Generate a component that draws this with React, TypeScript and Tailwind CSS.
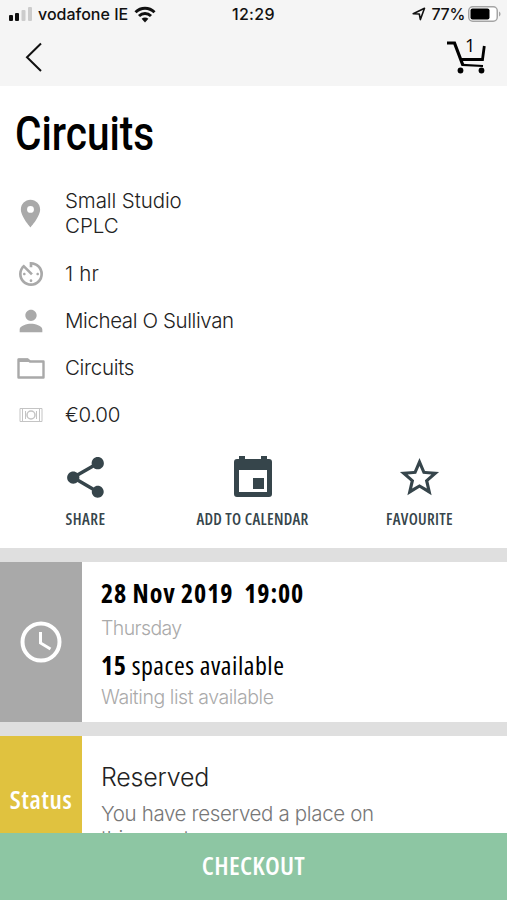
import type { ReactNode } from "react";
import { MdAvTimer, MdPerson, MdPlace, MdShare, MdStarBorder } from "react-icons/md";

const light = "font-['Inter',sans-serif] font-light whitespace-nowrap";
const condensed = "font-['Open_Sans',sans-serif] [font-stretch:75%] whitespace-nowrap";

function StatusBar() {
  return (
    <div className="flex h-7 items-center pl-[9px] pr-1.5 font-['Inter',sans-serif] text-[16px] font-medium text-[#111]">
      <div className="flex w-[190px] items-center">
        <svg width="24" height="16" viewBox="0 0 24 16">
          <rect x="0" y="9" width="4" height="6" rx="1" fill="#111" />
          <rect x="6" y="7" width="4" height="8" rx="1" fill="#111" />
          <rect x="12.500" y="4" width="4" height="11" rx="1" fill="#ccc" />
          <rect x="19" y="1" width="4" height="14" rx="1" fill="#ccc" />
        </svg>
        <span className="ml-[5px]">vodafone IE</span>
        <svg className="ml-1.5" width="22" height="17" viewBox="0 0 22 17" fill="none" stroke="#111" strokeWidth="3">
          <path d="M1.500 6.200C7 .8 15 .8 20.500 6.200" />
          <path d="M5 10c3.500-3.300 8.500-3.300 12 0" />
          <path d="M11 16.500 7.600 12.800c2-1.700 4.800-1.700 6.800 0z" fill="#111" stroke="none" />
        </svg>
      </div>
      <span className="ml-[33px] tracking-[0.3px]">12:29</span>
      <div className="ml-auto flex items-center">
        <svg width="14" height="14" viewBox="0 0 14 14" fill="none" stroke="#111" strokeWidth="1.600" strokeLinejoin="round">
          <path d="M1.200 6.800 12.500 1.300 8.400 12.600 7.300 7z" />
        </svg>
        <span className="ml-[5px] tracking-[-0.3px]">77%</span>
        <svg className="ml-[3px]" width="33" height="16" viewBox="0 0 33 16">
          <rect x=".75" y=".75" width="28.500" height="14.500" rx="4" fill="#fff" stroke="#a5a5a5" strokeWidth="1.500" />
          <rect x="2.500" y="2.500" width="19" height="11" rx="2" fill="#000" />
          <path d="M31 5.500c2 .8 2 4.200 0 5z" fill="#a5a5a5" />
        </svg>
      </div>
    </div>
  );
}

function Header() {
  return (
    <header className="h-[86px] shrink-0 bg-[#f5f5f5]">
      <StatusBar />
      <div className="flex h-[58px] items-center justify-between pl-[25px] pr-5">
        <svg width="18" height="30" viewBox="0 0 18 30" fill="none" stroke="#111" strokeWidth="2">
          <path d="M16 1.500 2 15.300 16 29" />
        </svg>
        <div className="relative h-9 w-[40px]">
          <svg width="40" height="36" viewBox="0 0 40 36" fill="none" stroke="#000">
            <path d="M0 4h7.500l8.500 22.500" strokeWidth="3.200" />
            <path d="M13.500 20.500h22L37.300 7" strokeWidth="2.800" />
            <path d="M15 25.800 36 27" strokeWidth="2.200" />
            <circle cx="13.500" cy="31.500" r="2.900" fill="#000" stroke="none" />
            <circle cx="34.500" cy="31.500" r="2.900" fill="#000" stroke="none" />
          </svg>
          <span className="absolute left-[18px] top-[-6px] font-['Open_Sans',sans-serif] text-[18px] leading-6">1</span>
        </div>
      </div>
    </header>
  );
}

function DetailRow({ icon, children, className }: { icon: ReactNode; children: ReactNode; className: string }) {
  return (
    <div className={`flex items-center ${className}`}>
      <div className="flex w-[61px] justify-center text-[#a9a9a9]">{icon}</div>
      <div className={`ml-1 text-[20.500px] leading-[25px] text-[#222] ${light}`}>{children}</div>
    </div>
  );
}

function Action({ icon, label, className }: { icon: ReactNode; label: string; className: string }) {
  return (
    <div className="flex w-[167px] flex-col items-center">
      <div className="flex h-[50px] items-center">{icon}</div>
      <span className={`mt-[7px] text-[16px] font-semibold leading-5 ${condensed} ${className}`}>{label}</span>
    </div>
  );
}

export default function App() {
  return (
    <div className="flex h-[900px] w-[507px] flex-col overflow-hidden bg-white">
      <Header />
      <main className="min-h-0 flex-1 overflow-hidden">
        <section className="h-[462px]">
          <h1 className="flex h-[102px] items-center pb-1.5 pl-[15px] text-[48px] font-medium leading-none">
            <span className="origin-left scale-x-[0.845] font-['Roboto',sans-serif]">Circuits</span>
          </h1>
          <DetailRow className="h-[50px]" icon={<MdPlace size={33} />}>
            <span className="tracking-[-0.1px]">Small Studio</span>
            <br />
            CPLC
          </DetailRow>
          <DetailRow className="mt-3 h-[47px]" icon={<MdAvTimer size={32} />}>
            <span className="tracking-[0.2px]">1 hr</span>
          </DetailRow>
          <DetailRow className="h-[47px]" icon={<MdPerson size={34} />}>
            <span className="tracking-[-0.4px]">Micheal O Sullivan</span>
          </DetailRow>
          <DetailRow
            className="h-[47px]"
            icon={
              <svg width="28" height="22" viewBox="0 0 28 22">
                <path d="M1.500 2.500h9l2.500 2h13.500v16h-25z" fill="none" stroke="currentColor" strokeWidth="2.400" strokeLinejoin="round" />
                <path d="M1.500 1.500h9.500l3 3.500H1.500z" fill="currentColor" />
              </svg>
            }
          >
            <span className="tracking-[-0.3px]">Circuits</span>
          </DetailRow>
          <DetailRow
            className="h-[47px]"
            icon={
              <svg width="24" height="16" viewBox="0 0 24 16" fill="none" stroke="#c4c4c4">
                <path d="M1 1.500h22v13H1zM3.500 1.500v13M20.500 1.500v13" />
                <circle cx="12" cy="8" r="4" strokeWidth="1.500" />
                <path d="M6.500 4v8M17.500 4v8" />
              </svg>
            }
          >
            <span className="tracking-[-0.3px]">€0.00</span>
          </DetailRow>
          <div className="mt-[14px] flex pl-[2px] text-[#36454b]">
            <Action icon={<MdShare size={49} />} label="SHARE" className="tracking-[0.5px]" />
            <Action
              icon={
                <svg width="38" height="42" viewBox="0 0 38 42" fill="currentColor">
                  <path
                    fillRule="evenodd"
                    d="M5 0h6v3h16V0h6v3h2a3 3 0 0 1 3 3v32a3 3 0 0 1-3 3H3a3 3 0 0 1-3-3V6a3 3 0 0 1 3-3h2zM5 14v22h28V14z"
                  />
                  <path d="M19 22h11v11H19z" />
                </svg>
              }
              label="ADD TO CALENDAR"
              className="tracking-[0.3px]"
            />
            <Action icon={<MdStarBorder size={47} />} label="FAVOURITE" className="tracking-[0.3px]" />
          </div>
        </section>

        <section className="flex h-[174px] border-t-[14px] border-[#dfdfdf]">
          <div className="flex w-[82px] shrink-0 items-center justify-center bg-[#a9a9a9] text-white">
            <svg width="42" height="42" viewBox="0 0 42 42" fill="none" stroke="currentColor">
              <circle cx="21" cy="21" r="18.500" strokeWidth="4" />
              <path d="M20.500 11v11l10 6" strokeWidth="3" />
            </svg>
          </div>
          <div className="flex flex-col pl-[19px] pt-[13px]">
            <p className={`text-[26px] font-bold leading-9 tracking-[0.85px] ${condensed}`}>28 Nov 2019&nbsp; 19:00</p>
            <p className={`mt-px text-[19.500px] leading-8 tracking-[-0.6px] text-[#aaa] ${light}`}>Thursday</p>
            <p className={`mt-[3px] text-[26px] leading-9 tracking-[0.5px] ${condensed}`}>
              <b>15</b> spaces available
            </p>
            <p className={`text-[19.500px] leading-7 tracking-[-0.42px] text-[#aaa] ${light}`}>Waiting list available</p>
          </div>
        </section>

        <section className="flex h-[144px] border-t-[14px] border-[#dfdfdf]">
          <div className="flex w-[82px] shrink-0 items-center justify-center bg-[#e0c23f] pb-1 text-white">
            <span className={`text-[26px] font-semibold tracking-[0.6px] ${condensed}`}>Status</span>
          </div>
          <div className="pl-[19px] pt-[23px]">
            <p className={`text-[25px] leading-9 tracking-[-0.2px] text-[#222] ${light}`}>Reserved</p>
            <p className={`mt-1.5 text-[20.500px] leading-[25px] tracking-[-0.35px] text-[#777] ${light}`}>
              You have reserved a place on
              <br />
              this event.
            </p>
          </div>
        </section>
      </main>
      <button className={`h-[67px] shrink-0 bg-[#8dc6a3] pb-[3px] text-[26px] font-semibold tracking-[0.3px] text-white ${condensed}`}>
        CHECKOUT
      </button>
    </div>
  );
}
